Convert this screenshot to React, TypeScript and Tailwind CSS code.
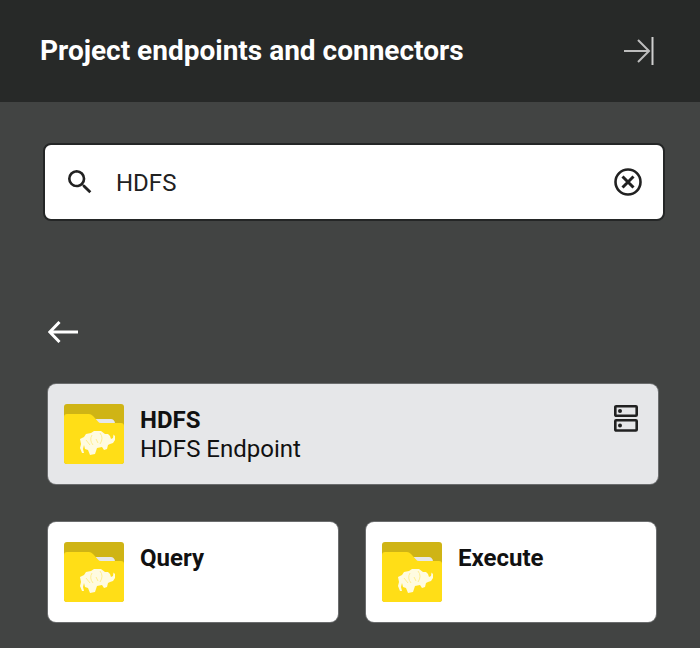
import { MdSearch } from 'react-icons/md';

function FolderIcon() {
  return (
    <svg width="60" height="60" viewBox="0 0 60 60" className="shrink-0">
      <rect width="60" height="60" rx="3" fill="#cfb415" />
      <path d="M30 15 H47 Q50 15 51 19 V22 H30 Z" fill="#e6e7e9" />
      <path d="M0 13 Q0 10 3 10 H25 Q27 10 29 12 L34 17.5 Q35 19 37 19 H57 Q60 19 60 22 V57 Q60 60 57 60 H3 Q0 60 0 57 Z" fill="#ffde17" />
      {/* elephant */}
      <path
        d="M16 35 L20 33 L22 30 L27 29 L30 27 L37 27 L41 30 L44 30 L46 32 L47 35 L49 34 L49.5 30.5 L51 32 L51 36 L49 39 L46 40 L44 41 L43 45 L40 46 L38 43 L33 44 L31 50 L26 51 L24 46 L21 45 L20 41 L19 45 L20 49 L18 49 L16 44 L17 40 Z"
        fill="#fffbe0"
      />
      <path d="M28 31 Q25 36 29 41 M36 29 Q40 34 36 40 M22 36 L26 41 M32 35 L34 39" fill="none" stroke="#ffef8f" strokeWidth="1" />
    </svg>
  );
}

function ServerIcon() {
  return (
    <svg width="24" height="27" viewBox="0 0 24 27" fill="none" className="shrink-0">
      <rect x="1.3" y="1.3" width="21.4" height="9.4" rx="0.8" stroke="#212121" strokeWidth="2.6" />
      <rect x="1.3" y="15.3" width="21.4" height="10.2" rx="0.8" stroke="#212121" strokeWidth="2.6" />
      <circle cx="6" cy="6" r="2" fill="#212121" />
      <circle cx="6" cy="20.4" r="2" fill="#212121" />
    </svg>
  );
}

function ClearIcon() {
  return (
    <svg width="28" height="28" viewBox="0 0 28 28" fill="none" stroke="#212121" strokeWidth="2.6" className="shrink-0">
      <circle cx="14" cy="14" r="12.5" />
      <path d="M8.5 8.5 L19.5 19.5 M19.5 8.5 L8.5 19.5" strokeWidth="3" />
    </svg>
  );
}

interface TileProps {
  title: string;
  subtitle?: string;
  active?: boolean;
}

function Tile({ title, subtitle, active }: TileProps) {
  return (
    <div
      className={`relative flex h-[100px] gap-4 rounded-lg p-4 pt-5 ring-1 ring-[#6b6d6e] ${
        active ? 'bg-[#e6e7e9]' : 'bg-white'
      }`}
    >
      <FolderIcon />
      <div className="flex flex-col pt-[2px] text-[24px] leading-[29px] text-[#111]">
        <span className="font-bold">{title}</span>
        {subtitle && <span>{subtitle}</span>}
      </div>
      {active && (
        <div className="absolute right-5 top-[21px]">
          <ServerIcon />
        </div>
      )}
    </div>
  );
}

export default function App() {
  return (
    <div className="flex h-[648px] w-[700px] flex-col overflow-hidden bg-[#424443] font-['Roboto',sans-serif]">
      <header className="flex h-[102px] shrink-0 items-center justify-between bg-[#272928] pl-10 pr-[46px]">
        <h1 className="text-[28px] font-bold text-white">Project endpoints and connectors</h1>
        <svg width="30" height="30" viewBox="0 0 30 30" fill="none" stroke="#bdbdbd" strokeWidth="2">
          <path d="M0 15 H25 M14 4 L25 15 L14 26" />
          <path d="M28.5 1 V29" stroke="#cfcfcf" />
        </svg>
      </header>
      <div className="px-[43px] pt-[41px]">
        <div className="flex h-[78px] w-[622px] items-center rounded-lg border-2 border-[#242626] bg-white pl-[19px] pr-[21px]">
          <MdSearch size={32} className="text-[#212121]" />
          <span className="ml-5 flex-1 pt-[2px] text-[24px] text-[#212121]">HDFS</span>
          <ClearIcon />
        </div>
      </div>
      <div className="px-12 pt-[100px]">
        <svg width="30" height="22" viewBox="0 0 30 22" fill="none" stroke="white" strokeWidth="3" className="block">
          <path d="M30 11 H2 M11.5 1 L1.8 11 L11.5 21" />
        </svg>
      </div>
      <div className="flex flex-col gap-[38px] pl-12 pr-[42px] pt-[41px]">
        <Tile title="HDFS" subtitle="HDFS Endpoint" active />
        <div className="grid grid-cols-[290px_290px] gap-x-7">
          <Tile title="Query" />
          <Tile title="Execute" />
        </div>
      </div>
    </div>
  );
}
